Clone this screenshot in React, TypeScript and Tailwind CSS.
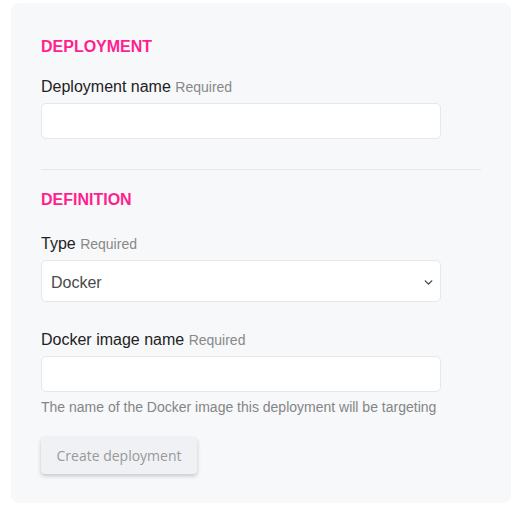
import { ChevronDown } from 'lucide-react';

const font = { fontFamily: '"Liberation Sans", Arial, sans-serif' };

function Label({ text }: { text: string }) {
  return (
    <label className="block text-[16px] leading-[18px] text-[#222] mb-[7px]">
      {text} <span className="text-[14px] text-[#888]">Required</span>
    </label>
  );
}

export default function App() {
  return (
    <div className="w-[521px] h-[513px] bg-white pt-[3px] pl-[11px]" style={font}>
      <div className="w-[500px] h-[500px] bg-[#f7f8fa] rounded-lg px-[30px] pt-[35px]">
        <h2 className="text-[16px] leading-[18px] font-bold text-[#ff1f8e] mb-[22px]">DEPLOYMENT</h2>
        <Label text="Deployment name" />
        <input className="block w-[400px] h-[36px] bg-white border border-[#e6e7ec] rounded-[5px] px-3 outline-none" />

        <div className="h-px bg-[#e6e7ec] mt-[30px] mb-[21px]" />

        <h2 className="text-[16px] leading-[18px] font-bold text-[#ff1f8e] mb-[26px]">DEFINITION</h2>
        <Label text="Type" />
        <div className="relative w-[400px] h-[42px] bg-white border border-[#e6e7ec] rounded-[5px] flex items-center pl-[9px] pt-[3px]">
          <span className="text-[16px] text-[#4a4a4a]">Docker</span>
          <ChevronDown className="absolute right-[5px] top-[15px] w-[13px] h-[13px] text-[#444]" strokeWidth={2.5} />
        </div>

        <div className="mt-[29px]">
          <Label text="Docker image name" />
        </div>
        <input className="block w-[400px] h-[36px] bg-white border border-[#e6e7ec] rounded-[5px] px-3 outline-none" />
        <p className="text-[14px] leading-[16px] text-[#858585] mt-[7px]">
          The name of the Docker image this deployment will be targeting
        </p>

        <button
          className="mt-[22px] w-[156px] h-[37px] bg-[#f0f1f4] rounded-[4px] shadow-[0_2px_4px_rgba(0,0,0,0.2)] text-[14px] text-[#999]"
          style={{ fontFamily: '"Open Sans", sans-serif' }}
        >
          Create deployment
        </button>
      </div>
    </div>
  );
}
